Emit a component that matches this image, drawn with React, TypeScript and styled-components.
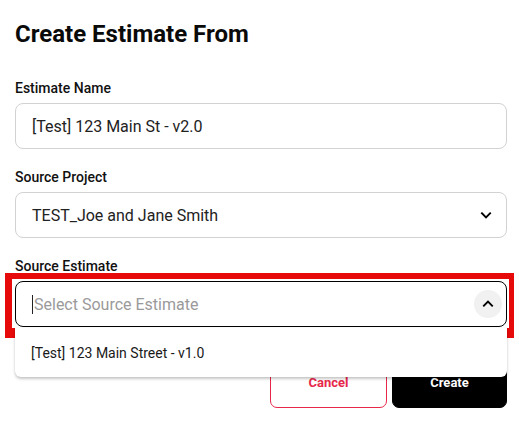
import React from 'react'
import styled, { createGlobalStyle } from 'styled-components'

const GlobalStyle = createGlobalStyle`
  body {
    margin: 0;
    background: #fff;
    font-family: Roboto, 'Liberation Sans', sans-serif;
    color: #111;
  }
`

const ChevronDown = () => (
  <svg width="14" height="14" viewBox="0 0 24 24" fill="none" stroke="#000" strokeWidth="3.2" strokeLinecap="square">
    <path d="M5 9l7 7 7-7" />
  </svg>
)

const ChevronUp = () => (
  <svg width="14" height="14" viewBox="0 0 24 24" fill="none" stroke="#000" strokeWidth="3.2" strokeLinecap="square">
    <path d="M5 15l7-7 7 7" />
  </svg>
)

const App = () => (
  <>
    <GlobalStyle />
    <Panel>
      <Title>Create Estimate From</Title>

      <Field>
        <Label>Estimate Name</Label>
        <Box>
          <Value>[Test] 123 Main St - v2.0</Value>
        </Box>
      </Field>

      <Field>
        <Label>Source Project</Label>
        <Box>
          <Value>TEST_Joe and Jane Smith</Value>
          <Arrow>
            <ChevronDown />
          </Arrow>
        </Box>
      </Field>

      <Field>
        <Label>Source Estimate</Label>
        <SelectWrap>
          <Box active>
            <Caret />
            <Placeholder>Select Source Estimate</Placeholder>
            <Arrow round>
              <ChevronUp />
            </Arrow>
          </Box>
          <Highlight />
          <Menu>
            <MenuItem>[Test] 123 Main Street - v1.0</MenuItem>
          </Menu>
        </SelectWrap>
      </Field>

      <Actions>
        <Button variant="outline">Cancel</Button>
        <Button variant="solid">Create</Button>
      </Actions>
    </Panel>
  </>
)

export default App

const Panel = styled.div`
  display: flex;
  flex-direction: column;
  padding: 20px 12px 0 15px;
`

const Title = styled.h2`
  margin: 0 0 32px;
  font-size: 24px;
  line-height: 28px;
  font-weight: 700;
  color: #0a0a0a;
`

const Field = styled.div`
  display: flex;
  flex-direction: column;
  gap: 7px;
  margin-bottom: 20px;

  &:last-of-type {
    margin-bottom: 0;
  }
`

const Label = styled.label`
  font-size: 14px;
  line-height: 16px;
  font-weight: 500;
  color: #111;
`

const Box = styled.div<{ active?: boolean }>`
  position: relative;
  display: flex;
  align-items: center;
  height: 46px;
  box-sizing: border-box;
  padding: 0 12px 0 16px;
  border: 1px solid ${(p) => (p.active ? '#000' : '#d2d2d2')};
  border-radius: 8px;
  background: #fff;
`

const Value = styled.span`
  flex: 1;
  font-size: 16px;
  color: #222;
`

const Placeholder = styled.span`
  flex: 1;
  font-size: 16px;
  color: #9a9a9a;
`

const Caret = styled.span`
  width: 1px;
  height: 19px;
  background: #222;
  margin-right: 1px;
`

const Arrow = styled.span<{ round?: boolean }>`
  display: flex;
  align-items: center;
  justify-content: center;
  width: 28px;
  height: 28px;
  margin-right: ${(p) => (p.round ? '-8px' : '-6px')};
  border-radius: 50%;
  background: ${(p) => (p.round ? '#f1f1f1' : 'transparent')};
`

const SelectWrap = styled.div`
  position: relative;
`

const Highlight = styled.div`
  position: absolute;
  top: -8px;
  left: -10px;
  right: -7px;
  bottom: -11px;
  border-style: solid;
  border-color: #e60a0a;
  border-width: 6px 5px 10px 7px;
  pointer-events: none;
`

const Menu = styled.div`
  position: absolute;
  top: 47px;
  left: 0;
  right: 0;
  z-index: 2;
  height: 49px;
  display: flex;
  align-items: center;
  background: #fff;
  border-radius: 0 0 6px 6px;
  box-shadow: 0 2px 3px rgba(0, 0, 0, 0.22), 0 0 2px rgba(0, 0, 0, 0.06);
`

const MenuItem = styled.div`
  padding: 0 16px;
  font-size: 14px;
  color: #1a1a1a;
`

const Actions = styled.div`
  display: flex;
  justify-content: flex-end;
  gap: 5px;
  margin-top: 9px;
`

const Button = styled.button<{ variant: 'outline' | 'solid' }>`
  width: ${(p) => (p.variant === 'outline' ? '117px' : '115px')};
  height: 52px;
  box-sizing: border-box;
  border-radius: 7px;
  font-family: Roboto, 'Liberation Sans', sans-serif;
  font-size: 13px;
  font-weight: 700;
  cursor: pointer;
  border: 1px solid ${(p) => (p.variant === 'outline' ? '#e8284a' : '#000')};
  background: ${(p) => (p.variant === 'outline' ? '#fff' : '#000')};
  color: ${(p) => (p.variant === 'outline' ? '#e8284a' : '#fff')};
`
